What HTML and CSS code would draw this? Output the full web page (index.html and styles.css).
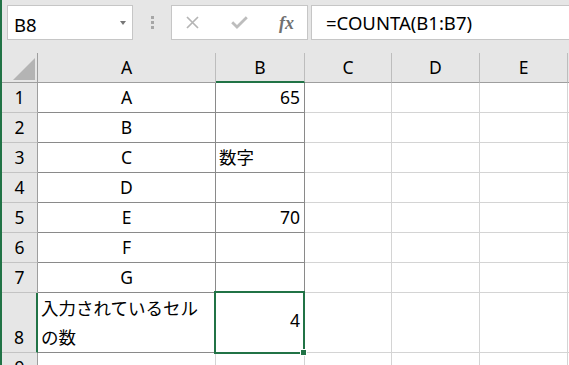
FILE: index.html
```html
<!DOCTYPE html>
<html lang="ja">
<head>
    <meta charset="UTF-8">
    <meta name="viewport" content="width=device-width, initial-scale=1.0">
    <title>COUNTA</title>
    <link rel="stylesheet" href="styles.css">
</head>
<body>
    <!-- 名前ボックスと数式バー -->
    <div class="toolbar">
        <div class="namebox">
            <span>B8</span>
            <span class="arrow"></span>
        </div>
        <div class="grip"><i></i><i></i><i></i></div>
        <div class="func">
            <svg class="ico-x" width="13" height="13" viewBox="0 0 13 13">
                <path d="M1 1L12 12M12 1L1 12" stroke="#b5b5b5" stroke-width="1.7" fill="none"/>
            </svg>
            <svg class="ico-ok" width="17" height="13" viewBox="0 0 17 13">
                <path d="M1.2 6.2L6 11L15.8 1.2" stroke="#bdbdbd" stroke-width="2.8" fill="none"/>
            </svg>
            <span class="fx">fx</span>
        </div>
        <div class="formula">=COUNTA(B1:B7)</div>
    </div>

    <!-- シート -->
    <div class="sheet">
        <div class="corner">
            <svg width="22" height="22" viewBox="0 0 22 22"><path d="M22 0V22H0Z" fill="#b4b4b4"/></svg>
        </div>
        <div class="colhead">A</div>
        <div class="colhead sel-col">B</div>
        <div class="colhead">C</div>
        <div class="colhead">D</div>
        <div class="colhead">E</div>
        <div class="colhead"></div>

        <div class="rowhead">1</div>
        <div class="cell bd center">A</div>
        <div class="cell bd right">65</div>
        <div class="cell"></div><div class="cell"></div><div class="cell"></div><div class="cell"></div>

        <div class="rowhead">2</div>
        <div class="cell bd center">B</div>
        <div class="cell bd"></div>
        <div class="cell"></div><div class="cell"></div><div class="cell"></div><div class="cell"></div>

        <div class="rowhead">3</div>
        <div class="cell bd center">C</div>
        <div class="cell bd">数字</div>
        <div class="cell"></div><div class="cell"></div><div class="cell"></div><div class="cell"></div>

        <div class="rowhead">4</div>
        <div class="cell bd center">D</div>
        <div class="cell bd"></div>
        <div class="cell"></div><div class="cell"></div><div class="cell"></div><div class="cell"></div>

        <div class="rowhead">5</div>
        <div class="cell bd center">E</div>
        <div class="cell bd right">70</div>
        <div class="cell"></div><div class="cell"></div><div class="cell"></div><div class="cell"></div>

        <div class="rowhead">6</div>
        <div class="cell bd center">F</div>
        <div class="cell bd"></div>
        <div class="cell"></div><div class="cell"></div><div class="cell"></div><div class="cell"></div>

        <div class="rowhead">7</div>
        <div class="cell bd center">G</div>
        <div class="cell bd"></div>
        <div class="cell"></div><div class="cell"></div><div class="cell"></div><div class="cell"></div>

        <div class="rowhead sel-row tall">8</div>
        <div class="cell bd wrap">入力されているセルの数</div>
        <div class="cell bd right active">4<div class="sel"></div><div class="handle"></div></div>
        <div class="cell"></div><div class="cell"></div><div class="cell"></div><div class="cell"></div>

        <div class="rowhead">9</div>
        <div class="cell"></div><div class="cell"></div><div class="cell"></div>
        <div class="cell"></div><div class="cell"></div><div class="cell"></div>
    </div>
</body>
</html>
```

FILE: styles.css
```css
html, body {
    height: 365px;
    overflow: hidden;
}
body {
    margin: 0;
    border-left: 2px solid #217346;
    background: #fff;
    color: #000;
    font-family: "Noto Sans", "Noto Sans CJK JP", sans-serif;
    font-size: 17.5px;
}
.toolbar {
    display: flex;
    align-items: flex-start;
    height: 53px;
    padding: 5px 0 0 5px;
    box-sizing: border-box;
    background: #e6e6e6;
}
.namebox {
    display: flex;
    justify-content: space-between;
    width: 126px;
    height: 35px;
    box-sizing: border-box;
    padding: 0 6px;
    border: 1px solid #c6c6c6;
    background: #fff;
    font-size: 18.5px;
    line-height: 37px;
}
.arrow {
    margin-top: 15px;
    width: 0;
    height: 0;
    border-left: 3.5px solid transparent;
    border-right: 3.5px solid transparent;
    border-top: 4px solid #777;
}
.grip {
    display: flex;
    flex-direction: column;
    align-items: center;
    gap: 2px;
    width: 38px;
    box-sizing: border-box;
    padding: 11px 0 0 1px;
}
.grip i {
    width: 3px;
    height: 3px;
    background: #a6a6a6;
}
.func {
    display: flex;
    align-items: center;
    width: 137px;
    height: 35px;
    box-sizing: border-box;
    padding-left: 14px;
    border: 1px solid #c6c6c6;
    background: #fff;
}
.ico-x {
    margin-right: 32px;
}
.ico-ok {
    margin-right: 31px;
}
.fx {
    font-family: "Liberation Serif", serif;
    font-style: italic;
    font-weight: bold;
    font-size: 18px;
    color: #707070;
    line-height: 20px;
    margin-top: 1px;
}
.formula {
    flex: 1;
    margin-left: 3px;
    height: 35px;
    box-sizing: border-box;
    padding-left: 14px;
    border: 1px solid #c6c6c6;
    border-right: none;
    background: #fff;
    font-size: 18.5px;
    line-height: 33px;
    white-space: nowrap;
}
.sheet {
    display: grid;
    grid-template-columns: 36px 178px 89px 87px 88px 88px 1fr;
    grid-template-rows: repeat(8, 30px) 60px 30px;
}
.sheet > div {
    box-sizing: border-box;
    border-right: 1px solid #d4d4d4;
    border-bottom: 1px solid #d4d4d4;
    padding: 0 3px;
    line-height: 29px;
    white-space: nowrap;
}
.corner {
    display: flex;
    justify-content: flex-end;
    align-items: flex-end;
    background: #e6e6e6;
    border-right-color: #9e9e9e !important;
    border-bottom-color: #9e9e9e !important;
    padding: 0 2px 2px 0 !important;
}
.colhead {
    background: #e6e6e6;
    text-align: center;
    border-right-color: #bdbdbd !important;
    border-bottom-color: #9e9e9e !important;
}
.colhead.sel-col {
    border-bottom: 2px solid #217346 !important;
}
.rowhead {
    background: #e6e6e6;
    text-align: center;
    border-right-color: #9e9e9e !important;
    border-bottom-color: #c3c3c3 !important;
}
.rowhead.sel-row {
    border-right: 2px solid #217346 !important;
}
.rowhead.tall {
    padding-top: 30px !important;
}
.bd {
    border-right-color: #8a8a8a !important;
    border-bottom-color: #8a8a8a !important;
}
.center {
    text-align: center;
}
.right {
    text-align: right;
    padding-right: 4px !important;
}
.wrap {
    white-space: normal !important;
    padding-top: 1px !important;
}
.active {
    position: relative;
    padding-top: 13px !important;
}
.sel {
    position: absolute;
    left: -2px;
    top: -2px;
    width: 91px;
    height: 63px;
    box-sizing: border-box;
    border: 2px solid #217346;
    z-index: 1;
}
.handle {
    position: absolute;
    left: 84px;
    top: 56px;
    width: 7px;
    height: 7px;
    box-sizing: border-box;
    border: 1px solid #fff;
    background: #217346;
    z-index: 2;
}
```
